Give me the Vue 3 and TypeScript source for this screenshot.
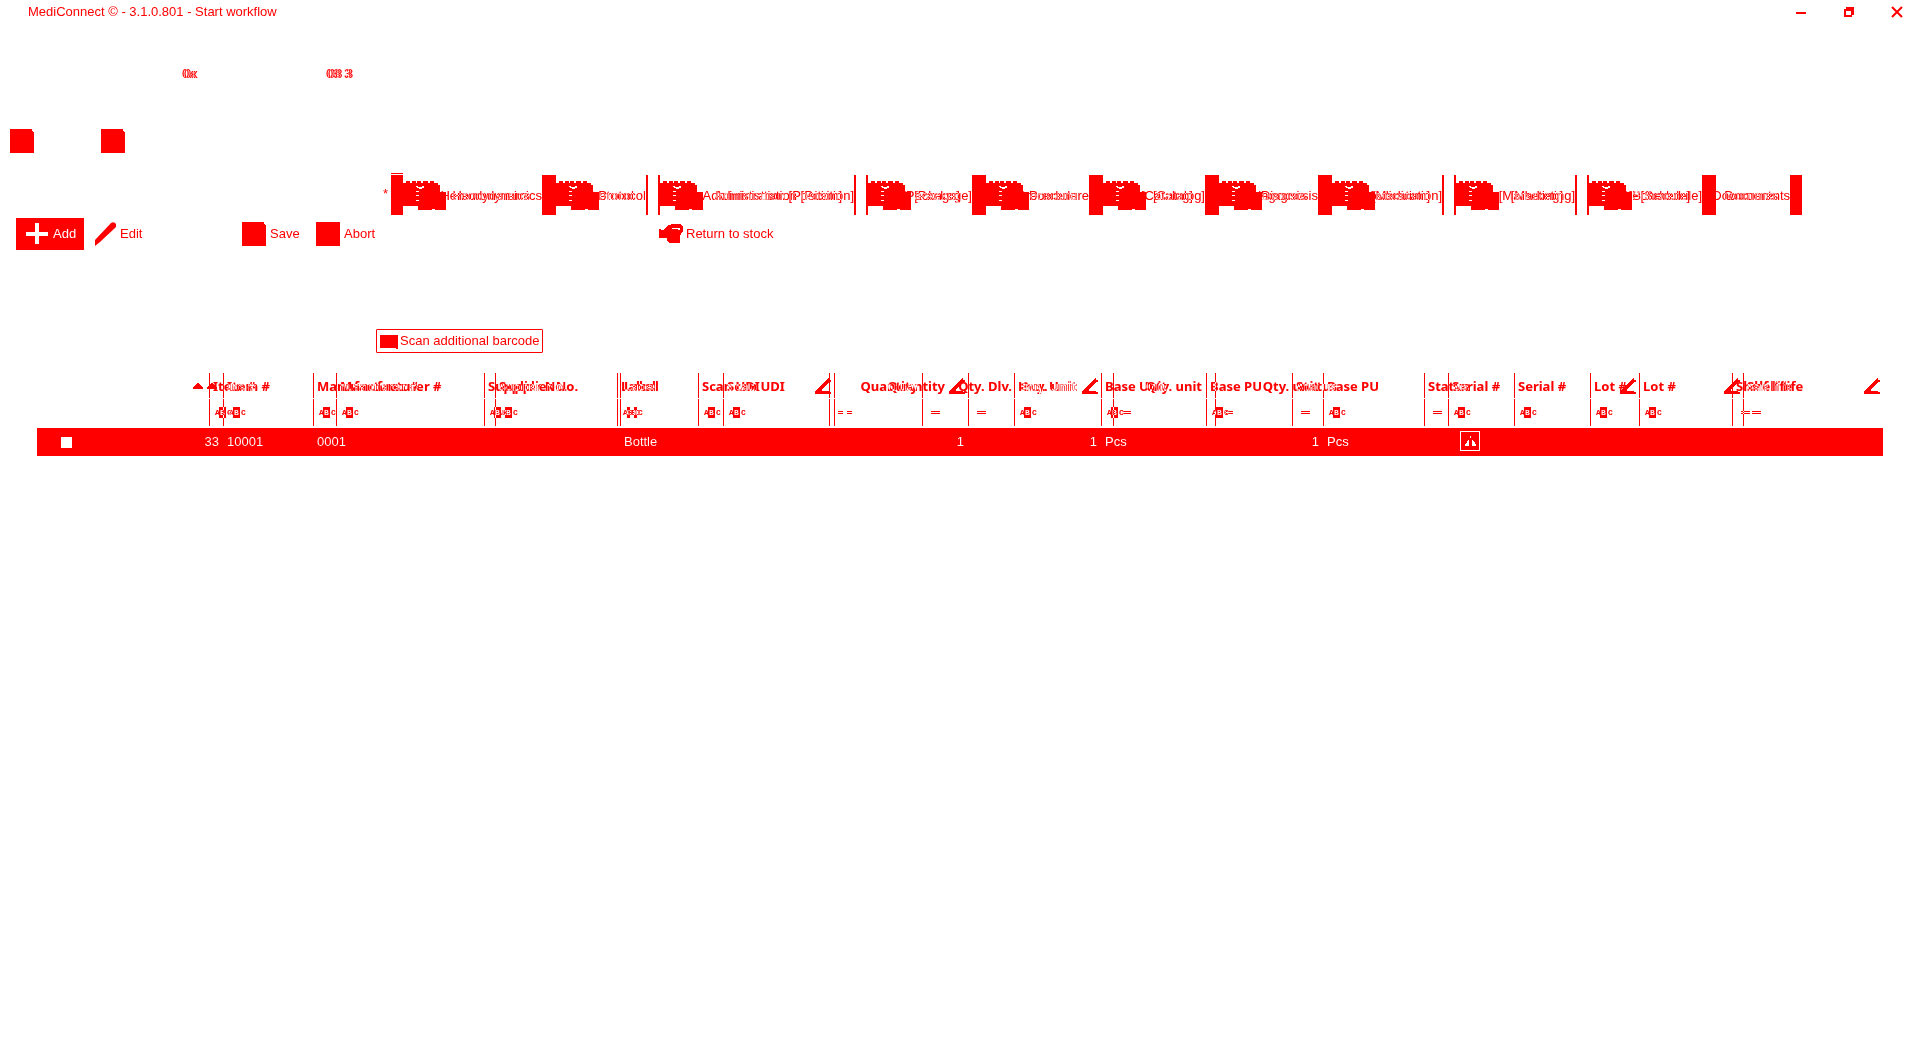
<script setup lang="ts">
interface Tab { label: string; width: number; icon: boolean; solid: boolean }
interface Column {
  width?: number
  text?: string
  line?: boolean
  right?: boolean
  room?: boolean
  filter?: 'text' | 'number'
  value?: string
  valueRight?: boolean
  kind?: 'check' | 'state'
}
interface Mark { width?: number; kind: 'sort' | 'pencil' }

const tabs: Tab[] = [
  { label: 'Hemodynamics', width: 151, icon: true, solid: true },
  { label: 'Protocol', width: 104, icon: true, solid: true },
  { label: 'Administration [Position]', width: 208, icon: true, solid: false },
  { label: '[Package]', width: 118, icon: true, solid: false },
  { label: 'Procedure', width: 117, icon: true, solid: true },
  { label: '[Catalog]', width: 116, icon: true, solid: true },
  { label: 'Diagnosis', width: 113, icon: true, solid: true },
  { label: '[Medication]', width: 124, icon: true, solid: true },
  { label: '[Marketing]', width: 133, icon: true, solid: false },
  { label: 'P[Schedule]', width: 127, icon: true, solid: false },
  { label: 'Documents', width: 88, icon: false, solid: true },
]

const back: Column[] = [
  { width: 186, kind: 'check', value: '33' },
  { width: 90, text: 'Item #', line: true, filter: 'text', value: '10001' },
  { width: 171, text: 'Manufacturer #', line: true, filter: 'text', value: '0001' },
  { width: 136, text: 'Supplier No.', line: true, filter: 'text' },
  { width: 78, text: 'Label', line: true, filter: 'text', value: 'Bottle' },
  { width: 131, text: 'Scan UDI', line: true, filter: 'text' },
  { width: 93, text: 'Quantity', line: true, right: true, filter: 'number' },
  { width: 94, text: 'Qty. Dlv.', line: true, right: true, filter: 'number' },
  { width: 97, text: 'Buy. unit' },
  { width: 93, text: 'Qty. unit', line: true, right: true, filter: 'number' },
  { width: 86, text: 'Base PU', line: true, filter: 'text' },
  { width: 132, text: 'Status', line: true, filter: 'number' },
  { width: 90, text: 'Status', line: true, filter: 'number' },
  { width: 76, text: 'Serial #', line: true, filter: 'text' },
  { width: 49, text: 'Lot #', line: true, filter: 'text' },
  { width: 104, text: 'Lot #', line: true, filter: 'text' },
  { text: 'Shelf life', line: true, filter: 'number' },
]

const front: Column[] = [
  { width: 172 },
  { width: 127, text: 'Item #', line: true, filter: 'text' },
  { width: 159, text: 'Manufacturer #', line: true, filter: 'text' },
  { width: 122, text: 'Supplier No.', line: true, filter: 'text' },
  { width: 106, text: 'Label', line: true, filter: 'text' },
  { width: 111, text: 'Scan UDI', line: true, filter: 'text' },
  { width: 134, text: 'Quantity', line: true, right: true, room: true, filter: 'number', value: '1', valueRight: true },
  { width: 46, line: true, filter: 'number' },
  { width: 87, text: 'Enq. Unit', line: true, filter: 'text', value: '1', valueRight: true },
  { width: 114, text: 'Base Unit', line: true, filter: 'text', value: 'Pcs' },
  { width: 108, text: 'Qty. unit', line: true, right: true, filter: 'number', value: '1', valueRight: true },
  { width: 125, text: 'Base PU', line: true, filter: 'text', value: 'Pcs' },
  { width: 284, text: 'Serial #', line: true, filter: 'text', kind: 'state' },
  { text: 'Shelf life', line: true, filter: 'number' },
]

const marks: Mark[] = [
  { width: 172, kind: 'sort' },
  { width: 14, kind: 'sort' },
  { width: 611, kind: 'pencil' },
  { width: 134, kind: 'pencil' },
  { width: 133, kind: 'pencil' },
  { width: 538, kind: 'pencil' },
  { width: 104, kind: 'pencil' },
  { kind: 'pencil' },
]

const layers = [
  { name: 'back', columns: back },
  { name: 'front', columns: front },
]
</script>

<template>
  <main class="app">
    <header class="titlebar">
      <span class="title">MediConnect © - 3.1.0.801 - Start workflow</span>
      <nav class="window-buttons">
        <button aria-label="Minimize"><svg width="12" height="12" shape-rendering="crispEdges"><path d="M1 6h10v2H1z" /></svg></button>
        <button aria-label="Restore"><svg width="12" height="12" shape-rendering="crispEdges"><path fill-rule="evenodd" d="M3 1h8v8H9v2H1V3h2zM3 5v4h5V5z" /></svg></button>
        <button aria-label="Close"><svg width="12" height="12"><path d="M1 1l10 10M11 1L1 11" fill="none" stroke="#f00" stroke-width="2" /></svg></button>
      </nav>
    </header>

    <section class="counters">
      <span class="pair"><span>0x</span><span>0x</span></span>
      <span class="pair"><span>08 3</span><span>08 3</span></span>
    </section>

    <section class="quick">
      <button aria-label="Save all"><svg width="24" height="24" shape-rendering="crispEdges"><path d="M0 0h22v2l2 1v21H0z" /></svg></button>
      <button aria-label="Save and close"><svg width="24" height="24" shape-rendering="crispEdges"><path d="M0 0h22v2l2 1v21H0z" /></svg></button>
    </section>

    <nav class="tabs">
      <span class="star">*</span>
      <button v-for="(tab, i) in tabs" :key="tab.label" class="tab" :class="{ first: i === 0 }" :style="{ width: tab.width + 'px' }">
        <span class="strip" :class="{ open: !tab.solid }"></span>
        <svg v-if="tab.icon" class="blob" width="43" height="29" shape-rendering="crispEdges">
          <path fill-rule="evenodd" d="M0 2H3V0H7V2H9V0H13V2H14V0H18V2H20V0H25V2H27V0H31V2H35V4H37V11H43V29H32V28H29V29H15V25H0zM13 5h2v1h4v-1h2v2h-2v1h-3v-1h-2v-1h-1zM13 10v1h3v-1zM13 14v1h3v-1zM13 19v1h3v-1z" />
        </svg>
        <span class="tab-text"><span>{{ tab.label }}</span><span>{{ tab.label }}</span></span>
      </button>
      <span class="strip end"></span>
    </nav>

    <section class="toolbar">
      <button class="add"><svg width="22" height="22" shape-rendering="crispEdges"><path fill="#fff" d="M9 0h4v9h9v4h-9v8H9v-8H0V9h9z" /></svg>Add</button>
      <button class="edit"><svg width="22" height="24"><path d="M0 24v-6L16 1q3-2 5 1v3L5 20z" /></svg>Edit</button>
      <button class="save"><svg width="24" height="24" shape-rendering="crispEdges"><path d="M0 0h22v2l2 1v21H0z" /></svg>Save</button>
      <button class="abort"><svg width="24" height="24"><path d="M0 0h24v24H0z" /></svg>Abort</button>
      <button class="return"><svg width="24" height="20" shape-rendering="crispEdges"><path fill-rule="evenodd" d="M0 5h2v1h2l4-4 5-2h8l3 2v5l-2 3-1 1v7l-1 1h-9l-3-2v-3H0zM13 4v1h6v1h2V4z" /></svg>Return to stock</button>
    </section>

    <section class="scan">
      <button><svg width="18" height="15" shape-rendering="crispEdges"><path d="M0 1h18v14h-2v-1H0z" /></svg>Scan additional barcode</button>
    </section>

    <section class="grids">
      <table v-for="layer in layers" :key="layer.name" :class="layer.name">
        <colgroup>
          <col v-for="(c, i) in layer.columns" :key="i" :style="c.width ? { width: c.width + 'px' } : {}" />
        </colgroup>
        <thead>
          <tr class="head">
            <th v-for="(c, i) in layer.columns" :key="i">
              <div class="cell" :class="{ line: c.line, right: c.right, room: c.room }">{{ c.text }}</div>
            </th>
          </tr>
          <tr class="filters">
            <td v-for="(c, i) in layer.columns" :key="i">
              <div class="cell" :class="{ line: c.line }">
                <span v-if="c.filter === 'text'" class="abc"><i>A</i><b>B</b><i>C</i></span>
                <span v-if="c.filter === 'number'" class="equals"></span>
              </div>
            </td>
          </tr>
        </thead>
        <tbody>
          <tr>
            <td v-for="(c, i) in layer.columns" :key="i">
              <div class="value" :class="{ right: c.valueRight, check: c.kind === 'check' }">
                <input v-if="c.kind === 'check'" type="checkbox" aria-label="Select row" />
                <span>{{ c.value }}</span>
                <svg v-if="c.kind === 'state'" class="state" width="20" height="20" shape-rendering="crispEdges"><path fill-rule="evenodd" d="M0 0h20v20H0zM1 1v18h18V1zM10 5h1v2h-1zM8 9h1v6H5v-1l1-2h1v-2h1zM12 9h1l1 2h1v2h1v2h-4z" /></svg>
              </div>
            </td>
          </tr>
        </tbody>
      </table>
      <div class="marks" aria-hidden="true">
        <span v-for="(m, i) in marks" :key="i" :class="[m.kind, { last: !m.width }]" :style="m.width ? { width: m.width + 'px' } : {}">
          <svg v-if="m.kind === 'pencil'" width="16" height="16" shape-rendering="crispEdges"><path d="M0 16v-3l9-9 4-4h1v2h2v2h-2L7 12v1h7v1h2v2z" /></svg>
          <svg v-else width="10" height="6" shape-rendering="crispEdges"><path d="M0 6V5l4-5h2l4 5v1z" /></svg>
        </span>
      </div>
    </section>
  </main>
</template>

<style>
body { margin: 0; background: #fff; }
</style>

<style scoped>
.app { isolation: isolate; background: #fff; min-height: 100vh; color: #f00; font: 13px/16px "Liberation Sans", Arial, sans-serif; overflow: hidden; }
button { display: flex; align-items: center; flex: none; border: 0; padding: 0; margin: 0; background: none; color: inherit; font: inherit; white-space: nowrap; }
svg { display: block; flex: none; fill: #f00; }
.titlebar { display: flex; align-items: center; justify-content: space-between; height: 24px; padding: 0 17px 0 28px; }
.window-buttons { display: flex; gap: 36px; }

/* Stacked copies invert each other where they cross: cyan over white gives red. */
.pair, .tab-text { display: grid; }
.pair > span, .tab-text > span { grid-area: 1 / 1; color: #0ff; mix-blend-mode: difference; white-space: pre; }
.counters { display: flex; height: 81px; padding: 26px 0 0 182px; box-sizing: border-box; margin-top: 16px; }
.pair { width: 144px; height: 16px; justify-content: start; }
.pair > span + span { padding-left: 2px; }

.quick { display: flex; gap: 67px; padding: 0 10px; margin-top: 8px; height: 24px; }
.tabs { display: flex; height: 40px; margin-top: 22px; padding-left: 383px; }
.star { width: 8px; padding-top: 11px; box-sizing: border-box; }
.tab { height: 40px; }
.strip { flex: none; width: 14px; height: 40px; background: #f00; box-sizing: border-box; z-index: 1; }
.strip.open { background: none; border: solid #f00; border-width: 0 2px; }
.first .strip, .strip.end { width: 12px; }
.first .strip { box-shadow: 0 -1px #fff, 0 -2px #f00; }
.blob { margin-top: 1px; z-index: 1; }
.tab-text { flex: 1; min-width: 0; height: 16px; padding-top: 2px; grid-template-columns: minmax(0, 1fr); justify-items: end; }
.tab-text > span:first-child { padding-right: 12px; }

.toolbar { display: flex; align-items: center; height: 32px; margin-top: 3px; padding-left: 16px; }
.add { width: 68px; height: 32px; padding-left: 10px; gap: 5px; background: #f00; color: #fff; }
.edit { width: 147px; margin-left: 11px; gap: 3px; }
.save { width: 74px; gap: 4px; }
.abort { width: 343px; gap: 4px; }
.return { gap: 3px; }
.scan { padding: 79px 0 0 376px; }
.scan button { width: 167px; height: 24px; border: 1px solid #f00; border-radius: 1px; padding-left: 3px; gap: 2px; }

.grids { display: grid; grid-template-columns: minmax(0, 1fr); margin: 20px 37px 0; }
table { grid-area: 1 / 1; width: 100%; table-layout: fixed; border-collapse: collapse; mix-blend-mode: difference; color: #0ff; }
table svg { fill: #0ff; }
th, td { padding: 0; vertical-align: top; text-align: left; }
th { font-family: "Noto Sans", sans-serif; }
.head { height: 26px; }
.filters { height: 29px; }
.cell { display: flex; align-items: center; box-sizing: border-box; height: 25px; padding: 0 4px; white-space: nowrap; }
.filters .cell { height: 27px; }
.cell.line { border-left: 1px solid #0ff; padding-left: 3px; }
.cell.right { justify-content: flex-end; }
.cell.room { padding-right: 23px; }
.abc { display: flex; align-items: center; height: 11px; padding-left: 2px; font: 700 8px/11px "Liberation Mono", monospace; }
.abc i { width: 4px; font-style: normal; }
.abc b { width: 7px; height: 11px; margin-right: 1px; background: #0ff; color: #000; text-align: center; }
.equals { width: 9px; height: 1px; margin-left: 5px; border: solid #0ff; border-width: 1px 0; }
.value { display: flex; align-items: center; box-sizing: border-box; height: 28px; padding: 0 4px; white-space: nowrap; }
.value.right { justify-content: flex-end; }
.value.check { justify-content: space-between; padding-left: 24px; }
.back tbody { background: #0ff; color: #000; }
input { appearance: none; width: 11px; height: 11px; margin: 0; background: #000; }
.state { margin: -2px 0 0 8px; }

.marks { grid-area: 1 / 1; display: flex; height: 25px; z-index: 1; pointer-events: none; }
.marks span { display: flex; align-items: center; justify-content: flex-end; box-sizing: border-box; padding-right: 3px; flex: none; }
.marks .sort { padding-right: 6px; }
.marks .last { flex: 1; }
</style>
